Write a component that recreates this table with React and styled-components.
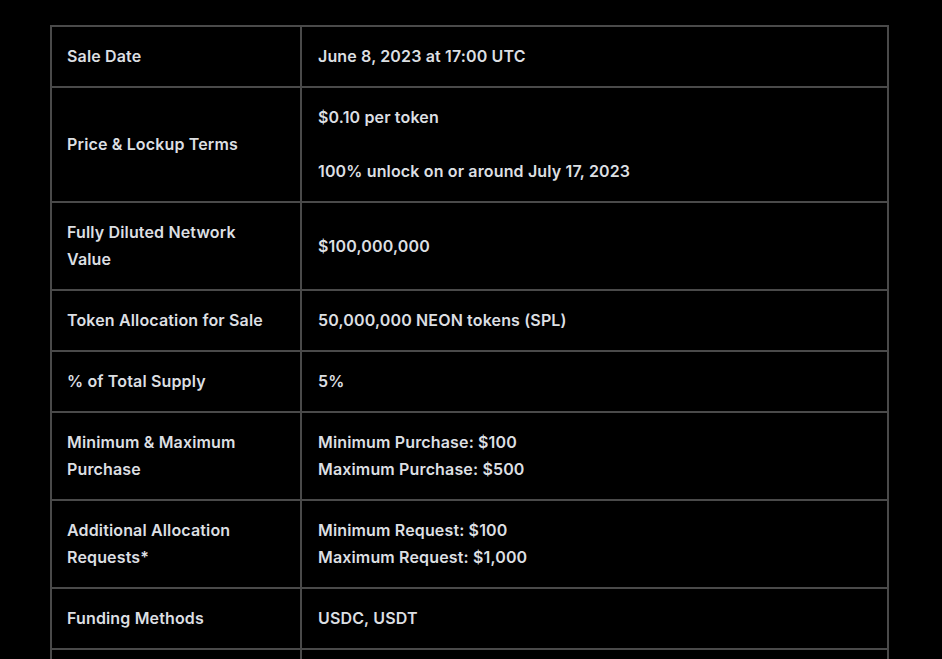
import React from "react";
import styled, { createGlobalStyle } from "styled-components";

const Global = createGlobalStyle`
  html, body { margin: 0; padding: 0; background: #000; }
  body { font-family: Inter, "Noto Sans", sans-serif; }
`;

const Page = styled.div`
  padding: 25px 0 0 50px;
  background: #000;
  min-height: 659px;
  box-sizing: border-box;
`;

const Table = styled.table`
  border-collapse: collapse;
  width: 839px;
  table-layout: fixed;
  color: #dcdfe2;
  font-size: 16px;
  font-weight: 600;
  line-height: 27px;
  letter-spacing: 0.15px;
`;

const Cell = styled.td`
  border: 2px solid #4a4a4a;
  padding: ${(p) => (p.$label ? "16px 27px 16px 15px" : "16px 16px 16px 16px")};
  vertical-align: middle;
`;

const rows = [
  ["Sale Date", ["June 8, 2023 at 17:00 UTC"]],
  ["Price & Lockup Terms", ["$0.10 per token", "", "100% unlock on or around July 17, 2023"]],
  ["Fully Diluted Network Value", ["$100,000,000"]],
  ["Token Allocation for Sale", ["50,000,000 NEON tokens (SPL)"]],
  ["% of Total Supply", ["5%"]],
  ["Minimum & Maximum Purchase", ["Minimum Purchase: $100", "Maximum Purchase: $500"]],
  ["Additional Allocation Requests*", ["Minimum Request: $100", "Maximum Request: $1,000"]],
  ["Funding Methods", ["USDC, USDT"]],
  ["Eligibility", ["See terms"]],
];

export default function App() {
  return (
    <Page>
      <Global />
      <Table>
        <colgroup>
          <col style={{ width: 250 }} />
          <col />
        </colgroup>
        <tbody>
          {rows.map(([label, lines]) => (
            <tr key={label}>
              <Cell $label>{label}</Cell>
              <Cell>
                {lines.map((l, i) => (
                  <React.Fragment key={i}>
                    {i > 0 && <br />}
                    {l}
                  </React.Fragment>
                ))}
              </Cell>
            </tr>
          ))}
        </tbody>
      </Table>
    </Page>
  );
}
